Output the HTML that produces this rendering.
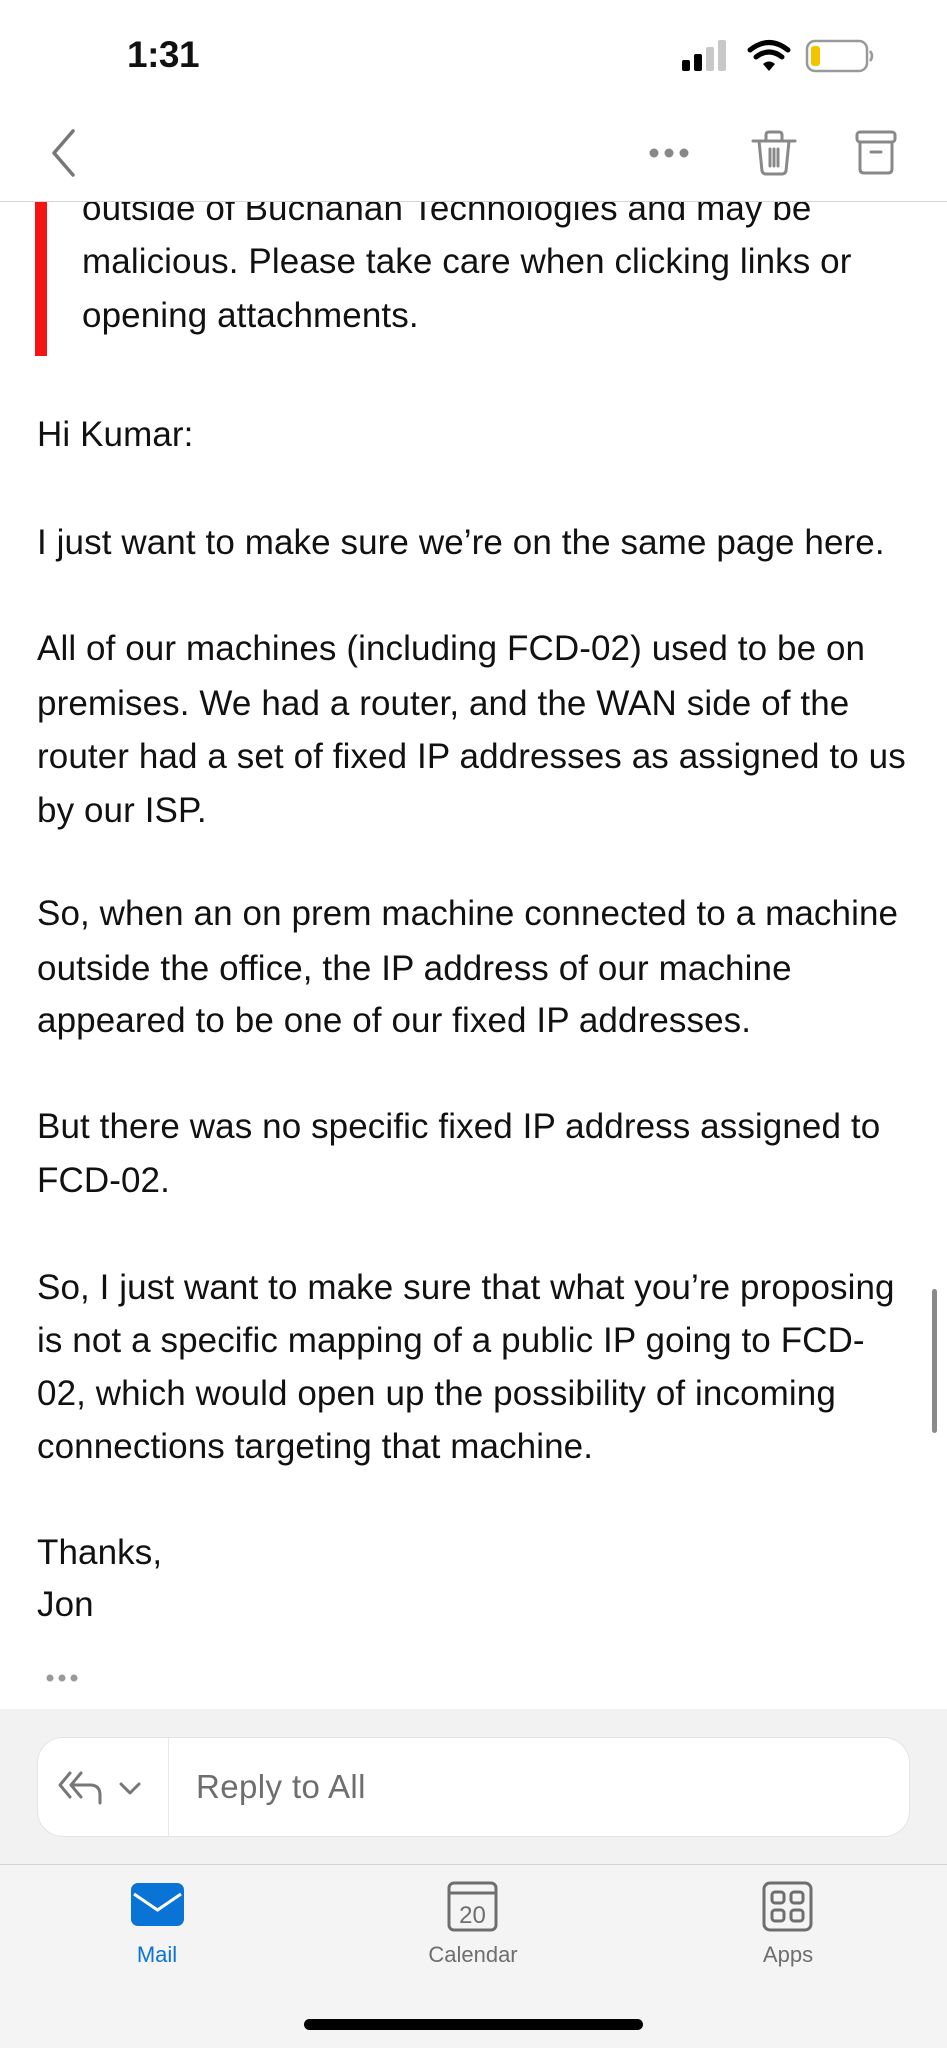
<!DOCTYPE html>
<html><head><meta charset="utf-8"><style>
*{margin:0;padding:0;box-sizing:border-box}
body{width:947px;height:2048px;background:#fff;position:relative;overflow:hidden;font-family:"Liberation Sans",Arial,sans-serif;color:#111}
.l{position:absolute;left:37px;font-size:35px;line-height:54px;height:54px;white-space:nowrap;letter-spacing:0.1px}
.w{left:82px}
</style></head><body>
<div style="position:absolute;left:127px;top:34px;font-size:37px;font-weight:bold;letter-spacing:-0.5px">1:31</div>
<svg style="position:absolute;left:680px;top:38px" width="200" height="40" viewBox="0 0 200 40">
<rect x="2" y="22" width="8" height="11" rx="2" fill="#000"/>
<rect x="14" y="16" width="8" height="17" rx="2" fill="#000"/>
<rect x="26" y="9" width="8" height="24" rx="2" fill="#c8c8c8"/>
<rect x="38" y="2" width="8" height="31" rx="2" fill="#c8c8c8"/>
<path d="M70 12 Q89 -3 108 12" stroke="#000" stroke-width="5" fill="none" stroke-linecap="round"/>
<path d="M76 19 Q89 9 102 19" stroke="#000" stroke-width="5" fill="none" stroke-linecap="round"/>
<path d="M83 26 L89 33 L95 26 Q89 21 83 26Z" fill="#000"/>
<rect x="127" y="3" width="60" height="30" rx="8" fill="none" stroke="#999" stroke-width="2.5"/>
<rect x="131" y="8" width="9" height="20" rx="3" fill="#f5c400"/>
<path d="M190 13 Q194 18 190 23" stroke="#999" stroke-width="2.5" fill="none"/>
</svg>
<svg style="position:absolute;left:0;top:125px" width="947" height="56">
<path d="M73 6 L54 28 L73 50" stroke="#777" stroke-width="3.5" fill="none" stroke-linecap="round" stroke-linejoin="round"/>
<circle cx="654" cy="28" r="4.5" fill="#888"/><circle cx="669" cy="28" r="4.5" fill="#888"/><circle cx="684" cy="28" r="4.5" fill="#888"/>
<path d="M753 16 H795 M766 16 V10 Q766 7 769 7 H779 Q782 7 782 10 V16 M759 16 L762 46 Q763 49 766 49 H782 Q785 49 786 46 L789 16 M770 24 V41 M774 24 V41 M778 24 V41" stroke="#888" stroke-width="3" fill="none" stroke-linecap="round" stroke-linejoin="round"/>
<rect x="857" y="7" width="38" height="10" rx="3" fill="none" stroke="#888" stroke-width="3"/>
<path d="M860 17 V44 Q860 48 864 48 H888 Q892 48 892 44 V17 M871 27 H881" stroke="#888" stroke-width="3" fill="none" stroke-linecap="round"/>
</svg>
<div style="position:absolute;left:0;top:201px;width:947px;height:1px;background:#d6d6d6"></div>
<div style="position:absolute;left:35px;top:202px;width:12px;height:154px;background:#f41414"></div>
<div style="position:absolute;left:0;top:202px;width:947px;height:40px;overflow:hidden"><div class="l w" style="top:-20px">outside of Buchanan Technologies and may be</div></div>
<div class="l w" style="top:235px">malicious. Please take care when clicking links or</div>
<div class="l w" style="top:289px">opening attachments.</div>
<div class="l" style="top:408px">Hi Kumar:</div>
<div class="l" style="top:516px">I just want to make sure we’re on the same page here.</div>
<div class="l" style="top:622px">All of our machines (including FCD-02) used to be on</div>
<div class="l" style="top:677px">premises. We had a router, and the WAN side of the</div>
<div class="l" style="top:730px">router had a set of fixed IP addresses as assigned to us</div>
<div class="l" style="top:784px">by our ISP.</div>
<div class="l" style="top:887px">So, when an on prem machine connected to a machine</div>
<div class="l" style="top:942px">outside the office, the IP address of our machine</div>
<div class="l" style="top:994px">appeared to be one of our fixed IP addresses.</div>
<div class="l" style="top:1100px">But there was no specific fixed IP address assigned to</div>
<div class="l" style="top:1154px">FCD-02.</div>
<div class="l" style="top:1261px">So, I just want to make sure that what you’re proposing</div>
<div class="l" style="top:1314px">is not a specific mapping of a public IP going to FCD-</div>
<div class="l" style="top:1367px">02, which would open up the possibility of incoming</div>
<div class="l" style="top:1420px">connections targeting that machine.</div>
<div class="l" style="top:1526px">Thanks,</div>
<div class="l" style="top:1578px">Jon</div>
<div style="position:absolute;left:932px;top:1289px;width:5px;height:144px;border-radius:3px;background:#8a8a8a"></div>
<svg style="position:absolute;left:44px;top:1670px" width="40" height="16"><circle cx="6" cy="8" r="3.5" fill="#999"/><circle cx="18" cy="8" r="3.5" fill="#999"/><circle cx="30" cy="8" r="3.5" fill="#999"/></svg>
<div style="position:absolute;left:0;top:1709px;width:947px;height:155px;background:#f2f2f2"></div>
<div style="position:absolute;left:37px;top:1737px;width:873px;height:100px;border-radius:26px;background:#fff;border:1px solid #e4e4e4"></div>
<div style="position:absolute;left:168px;top:1738px;width:1px;height:98px;background:#e8e8e8"></div>
<svg style="position:absolute;left:56px;top:1765px" width="100" height="46">
<path d="M14 8 L4 20 L14 32 M25 8 L15 20 L25 32" stroke="#777" stroke-width="3" fill="none" stroke-linecap="round" stroke-linejoin="round"/>
<path d="M15 20 H34 Q44 20 44 30 V38" stroke="#777" stroke-width="3" fill="none" stroke-linecap="round"/>
<path d="M65 19 L74 28 L83 19" stroke="#777" stroke-width="3" fill="none" stroke-linecap="round" stroke-linejoin="round"/>
</svg>
<div style="position:absolute;left:196px;top:1760px;font-size:33px;line-height:54px;color:#6e6e6e;letter-spacing:0.4px">Reply to All</div>
<div style="position:absolute;left:0;top:1864px;width:947px;height:1px;background:#d4d4d4"></div>
<div style="position:absolute;left:0;top:1865px;width:947px;height:183px;background:#f4f4f4"></div>
<svg style="position:absolute;left:128px;top:1880px" width="60" height="50">
<rect x="3" y="3" width="53" height="43" rx="7" fill="#0a74d6"/>
<path d="M6 14 L29.5 30 L53 14" stroke="#fff" stroke-width="3" fill="none"/>
</svg>
<svg style="position:absolute;left:446px;top:1880px" width="54" height="54">
<rect x="3" y="3" width="47" height="47" rx="5" fill="none" stroke="#6e6e6e" stroke-width="3"/>
<path d="M3 13 H50" stroke="#6e6e6e" stroke-width="3"/>
<text x="26.5" y="43" font-family="Liberation Sans,sans-serif" font-size="24" fill="#6e6e6e" text-anchor="middle">20</text>
</svg>
<svg style="position:absolute;left:761px;top:1880px" width="54" height="54">
<rect x="3" y="3" width="47" height="47" rx="6" fill="none" stroke="#6e6e6e" stroke-width="3"/>
<rect x="11" y="12" width="12" height="11" rx="3" fill="none" stroke="#6e6e6e" stroke-width="3"/>
<rect x="30" y="12" width="12" height="11" rx="3" fill="none" stroke="#6e6e6e" stroke-width="3"/>
<rect x="11" y="30" width="12" height="11" rx="3" fill="none" stroke="#6e6e6e" stroke-width="3"/>
<rect x="30" y="30" width="12" height="11" rx="3" fill="none" stroke="#6e6e6e" stroke-width="3"/>
</svg>
<div style="position:absolute;left:57px;width:200px;top:1942px;text-align:center;font-size:22px;color:#0a74d6">Mail</div>
<div style="position:absolute;left:373px;width:200px;top:1942px;text-align:center;font-size:22px;color:#6e6e6e">Calendar</div>
<div style="position:absolute;left:688px;width:200px;top:1942px;text-align:center;font-size:22px;color:#6e6e6e">Apps</div>
<div style="position:absolute;left:304px;top:2019px;width:339px;height:11px;border-radius:6px;background:#000"></div>
</body></html>
